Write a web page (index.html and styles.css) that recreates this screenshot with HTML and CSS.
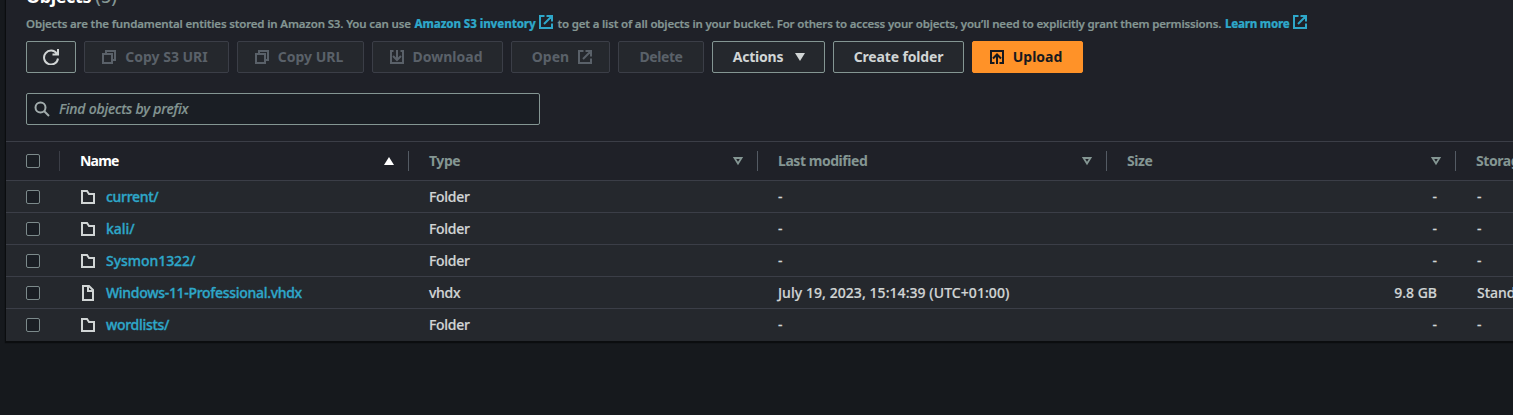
FILE: index.html
```html
<!DOCTYPE html>
<html lang="en">
<head>
<meta charset="utf-8">
<title>Objects</title>
<link rel="stylesheet" href="styles.css">
</head>
<body>
<svg class="sprite" aria-hidden="true">
  <symbol id="external" viewBox="0 0 16 16"><path d="M6.500 2H2v12h12V9.500M8.500 2H14v5.500M6 10l8-8"/></symbol>
  <symbol id="copy" viewBox="0 0 16 16"><path d="M2 5h9v9H2zM5 5V2h9v9h-3"/></symbol>
  <symbol id="folder" viewBox="0 0 16 16"><path d="M2 14V2h5l2 3h5v9z"/></symbol>
  <symbol id="file" viewBox="0 0 16 16"><path d="M3 1h6l4 4v10H3zM8 1v5h5"/></symbol>
  <symbol id="sort" viewBox="0 0 16 16"><path d="M4.500 5h7L8 10.500z"/></symbol>
</svg>
<main class="panel">
  <header class="panel-head">
    <h2 class="title">Objects <span class="count">(5)</span></h2>
    <p class="desc"><span class="d1">Objects are the fundamental entities stored in Amazon S3. You can use</span><a class="link l1">Amazon S3 inventory</a><svg class="icon ext"><use href="#external"/></svg><span class="d2">to get a list of all objects in your bucket. For others to access your objects, you’ll need to explicitly grant them permissions.</span><a class="link l2">Learn more</a><svg class="icon ext"><use href="#external"/></svg></p>
    <div class="toolbar">
      <button class="btn refresh" aria-label="Refresh"><svg class="icon" viewBox="0 0 16 16"><path d="M15 9.500a7 7 0 1 1-1.200-5M9.500 5.500h5.500V0"/></svg></button>
      <button class="btn off lead b-uri"><svg class="icon"><use href="#copy"/></svg><span>Copy S3 URI</span></button>
      <button class="btn off lead b-url"><svg class="icon"><use href="#copy"/></svg><span>Copy URL</span></button>
      <button class="btn off lead b-down"><svg class="icon" viewBox="0 0 16 16"><path d="M4.500 2H2v12h12V2h-2.500M8 1v9.500M4 7l4 4 4-4"/></svg><span>Download</span></button>
      <button class="btn off trail b-open"><span>Open</span><svg class="icon"><use href="#external"/></svg></button>
      <button class="btn off b-del"><span>Delete</span></button>
      <button class="btn trail b-act"><span>Actions</span><svg class="icon solid" viewBox="0 0 16 16"><path d="M3 4h10l-5 8z"/></svg></button>
      <button class="btn b-create"><span>Create folder</span></button>
      <button class="btn primary lead b-up"><svg class="icon" viewBox="0 0 16 16"><path d="M5.500 14H2V2h12v12h-3.500M8 15V6.500M4 9.500l4-4 4 4"/></svg><span>Upload</span></button>
    </div>
    <div class="search"><svg class="icon" viewBox="0 0 16 16"><circle cx="6.500" cy="6.500" r="5"/><path d="m10 10 5 5"/></svg><span class="placeholder">Find objects by prefix</span></div>
  </header>
  <div class="row head">
    <div class="check"><i class="box"></i></div>
    <div class="cell sorted"><span>Name</span><svg class="icon solid" viewBox="0 0 16 16"><path d="M3 12h10L8 4z"/></svg></div>
    <div class="cell"><span>Type</span><svg class="icon"><use href="#sort"/></svg></div>
    <div class="cell"><span>Last modified</span><svg class="icon"><use href="#sort"/></svg></div>
    <div class="cell"><span>Size</span><svg class="icon"><use href="#sort"/></svg></div>
    <div class="cell last"><span>Storage class</span></div>
  </div>
  <div class="row"><div class="check"><i class="box"></i></div><div class="cell name"><svg class="icon"><use href="#folder"/></svg><a>current/</a></div><div class="cell type">Folder</div><div class="cell">-</div><div class="cell num">-</div><div class="cell last">-</div></div>
  <div class="row"><div class="check"><i class="box"></i></div><div class="cell name"><svg class="icon"><use href="#folder"/></svg><a class="wide">kali/</a></div><div class="cell type">Folder</div><div class="cell">-</div><div class="cell num">-</div><div class="cell last">-</div></div>
  <div class="row"><div class="check"><i class="box"></i></div><div class="cell name"><svg class="icon"><use href="#folder"/></svg><a class="wide">Sysmon1322/</a></div><div class="cell type">Folder</div><div class="cell">-</div><div class="cell num">-</div><div class="cell last">-</div></div>
  <div class="row"><div class="check"><i class="box"></i></div><div class="cell name"><svg class="icon"><use href="#file"/></svg><a>Windows-11-Professional.vhdx</a></div><div class="cell type">vhdx</div><div class="cell date">July 19, 2023, 15:14:39 (UTC+01:00)</div><div class="cell num">9.8 GB</div><div class="cell last">Standard</div></div>
  <div class="row"><div class="check"><i class="box"></i></div><div class="cell name"><svg class="icon"><use href="#folder"/></svg><a>wordlists/</a></div><div class="cell type">Folder</div><div class="cell">-</div><div class="cell num">-</div><div class="cell last">-</div></div>
</main>
</body>
</html>
```
FILE: styles.css
```css
* { box-sizing: border-box; }
html, body { margin: 0; height: 415px; overflow: hidden; background: #16191d; }
body { font: 500 14px/22px "Noto Sans", "Open Sans", sans-serif; color: #d1d5d5; display: flow-root; }
.sprite { display: none; }
.icon { width: 16px; height: 16px; flex: none; fill: none; stroke: currentColor; stroke-width: 2; }
.solid { fill: currentColor; stroke: none; }

.panel { margin: -16px 0 0 6px; height: 357px; background: #25282d; box-shadow: 0 1px 1px 1px #0b0d0f; white-space: nowrap; }
.panel-head { height: 157px; padding: 0 20px; background: #1f2128; }
.title { margin: 0; height: 28px; font-size: 18px; line-height: 24px; font-weight: 700; letter-spacing: -0.4px; color: #fff; }
.count { color: #849693; font-weight: 500; letter-spacing: 0; }
.desc { margin: 0; height: 22px; padding-top: 1px; display: flex; align-items: center; font-size: 11.5px; font-weight: 600; color: #849693; -webkit-text-stroke: 0.2px; }
.desc span, .desc a, .desc svg { flex: none; }
.d1 { width: 385px; letter-spacing: -0.16px; }
.d2 { width: 664px; letter-spacing: -0.17px; }
.link { color: #2ea7c9; font-weight: 800; margin-left: 3.500px; }
.l1 { width: 122px; letter-spacing: -0.1px; }
.l2 { width: 65px; letter-spacing: -0.25px; }
.desc .ext { color: #2ea7c9; margin: -3px 3px 0 1px; }
.desc .l2 + .ext { margin-left: 2px; }
.desc .d2 { margin-left: 1px; }
.toolbar { display: flex; gap: 8px; margin-top: 7px; height: 32px; }
.btn { display: flex; align-items: center; justify-content: center; gap: 8px; height: 32px; padding: 0; border: 1px solid #849693; border-radius: 2px; background: #25282d; color: #d1d5d5; font: 700 14px/20px "Noto Sans", sans-serif; }
.lead { padding-right: 4px; }
.trail { padding-left: 4px; }
.off { border-color: #3b3e47; color: #5a6169; }
.primary { background: #ff9228; border-color: #ff9228; color: #16191f; }
.refresh { width: 50px; }
.b-uri { width: 145px; }
.b-url { width: 127px; }
.b-down { width: 131px; }
.b-open { width: 99px; }
.b-del { width: 86px; letter-spacing: -0.4px; }
.b-act { width: 113px; letter-spacing: -0.2px; gap: 9px; }
.b-create { width: 131px; letter-spacing: -0.15px; }
.b-up { width: 111px; }
.search { width: 514px; height: 32px; margin-top: 20px; padding: 0 8px 0 7px; display: flex; align-items: center; gap: 9px; border: 1px solid #849693; border-radius: 2px; background: #1a1e24; color: #849693; }
.search .icon { color: #a2adad; }
.placeholder { font-style: italic; letter-spacing: -0.2px; -webkit-text-stroke: 0.2px; }

.row { display: grid; grid-template-columns: 54px 349px 349px 349px 349px minmax(0, 1fr); height: 32px; border-top: 1px solid #3b3e47; align-items: center; -webkit-text-stroke: 0.2px; }
.row.head { height: 39px; grid-template-columns: 53px 349px 349px 349px 349px minmax(0, 1fr); background: #1f2128; color: #849693; font-weight: 700; letter-spacing: -0.45px; -webkit-text-stroke: 0; }
.check { padding-left: 20px; display: flex; align-items: center; }
.box { width: 14px; height: 14px; border: 1px solid #7c8a8b; border-radius: 2px; background: #1a1e24; }
.cell { padding: 0 19px 0 20px; display: flex; align-items: center; }
.head .cell { height: 20px; justify-content: space-between; padding-right: 11px; border-left: 1px solid #545b64; }
.head .sorted { color: #fff; border-color: #3b3e47; letter-spacing: -0.9px; }
.head .icon { stroke-width: 1.8; }
.head .solid { stroke: none; }
.name { gap: 10px; }
.name a { color: #2ea7c9; letter-spacing: -0.3px; -webkit-text-stroke: 0.35px; }
.name .wide { letter-spacing: -0.05px; }
.type { letter-spacing: -0.3px; }
.date { letter-spacing: 0.06px; }
.num { justify-content: flex-end; }
.last { padding: 0 0 0 21px; overflow: hidden; }
.head .last { padding: 0 0 0 20px; }
.head .sorted { letter-spacing: -0.8px; }
```
